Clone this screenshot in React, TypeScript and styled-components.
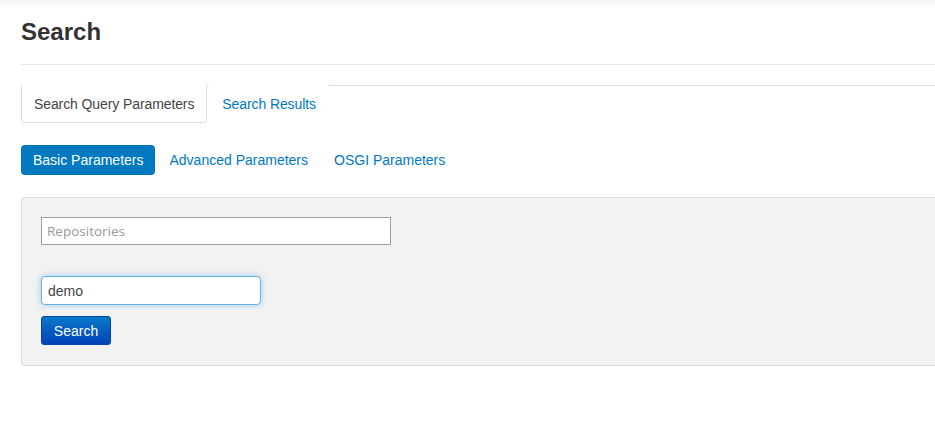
import React from "react";
import styled, { createGlobalStyle } from "styled-components";

const Global = createGlobalStyle`
  html, body { margin: 0; padding: 0; background: #fff; overflow: hidden; }
  body { font-family: "Liberation Sans", Arial, Helvetica, sans-serif; font-size: 14px; color: #333; }
`;

const TopShade = styled.div`
  height: 6px;
  background: linear-gradient(#f3f3f3, #ffffff);
`;

const Page = styled.div`
  padding-left: 21px;
  width: 100%;
  box-sizing: border-box;
`;

const Header = styled.div`
  padding-top: 11px;
  padding-bottom: 17px;
  border-bottom: 1px solid #e5e5e5;
`;

const Title = styled.h1`
  margin: 0;
  font-size: 24px;
  line-height: 30px;
  font-weight: bold;
  color: #333;
`;

const Tabs = styled.ul`
  list-style: none;
  margin: 20px 0 0;
  padding: 0;
  display: flex;
  border-top: 1px solid #dddddd;
`;

const Tab = styled.li<{ $active?: boolean }>`
  margin-right: 2px;
  margin-top: -1px;
  padding: 8px 12px;
  line-height: 20px;
  letter-spacing: -0.1px;
  border: 1px solid ${(p) => (p.$active ? "#dddddd" : "transparent")};
  border-top-color: ${(p) => (p.$active ? "#fff" : "transparent")};
  border-radius: 0 0 4px 4px;
  background: #fff;
  color: ${(p) => (p.$active ? "#444" : "#0079c1")};
`;

const Pills = styled.ul`
  list-style: none;
  margin: 22px 0 0;
  padding: 0;
  display: flex;
`;

const Pill = styled.li<{ $active?: boolean }>`
  margin-right: 2px;
  padding: 5px 12px;
  line-height: 20px;
  border-radius: 4px;
  background: ${(p) => (p.$active ? "#0079c1" : "transparent")};
  color: ${(p) => (p.$active ? "#fff" : "#0079c1")};
`;

const Panel = styled.div`
  margin-top: 22px;
  background: #f2f2f2;
  border: 1px solid #dddddd;
  border-right: none;
  border-radius: 4px 0 0 4px;
  padding: 19px 0 20px 19px;
  display: flex;
  flex-direction: column;
  align-items: flex-start;
`;

const RepoInput = styled.input`
  box-sizing: border-box;
  width: 350px;
  height: 28px;
  border: 1px solid #a0a0a0;
  border-radius: 0;
  padding: 0 5px;
  font-family: "Open Sans", "Noto Sans", sans-serif;
  font-size: 13.5px;
  color: #333;
  background: #fff;
  outline: none;
  &::placeholder { color: #999; }
`;

const QueryInput = styled.input`
  box-sizing: border-box;
  margin-top: 31px;
  width: 220px;
  height: 29px;
  border: 1px solid #66afe9;
  border-radius: 4px;
  box-shadow: 0 0 6px rgba(102, 175, 233, 0.6);
  padding: 0 6px;
  font-family: "Liberation Sans", Arial, sans-serif;
  font-size: 14px;
  color: #444;
  background: #fff;
  outline: none;
`;

const SearchButton = styled.button`
  margin-top: 11px;
  width: 70px;
  height: 29px;
  border: 1px solid #0046b0;
  border-radius: 3px;
  background: linear-gradient(#0a78c8, #0042b8);
  color: #fff;
  font-family: "Liberation Sans", Arial, sans-serif;
  font-size: 14px;
  padding: 0;
  cursor: pointer;
`;

export default function App() {
  return (
    <>
      <Global />
      <TopShade />
      <Page>
        <Header>
          <Title>Search</Title>
        </Header>
        <Tabs>
          <Tab $active>Search Query Parameters</Tab>
          <Tab>Search Results</Tab>
        </Tabs>
        <Pills>
          <Pill $active>Basic Parameters</Pill>
          <Pill>Advanced Parameters</Pill>
          <Pill>OSGI Parameters</Pill>
        </Pills>
        <Panel>
          <RepoInput placeholder="Repositories" />
          <QueryInput defaultValue="demo" />
          <SearchButton>Search</SearchButton>
        </Panel>
      </Page>
    </>
  );
}
